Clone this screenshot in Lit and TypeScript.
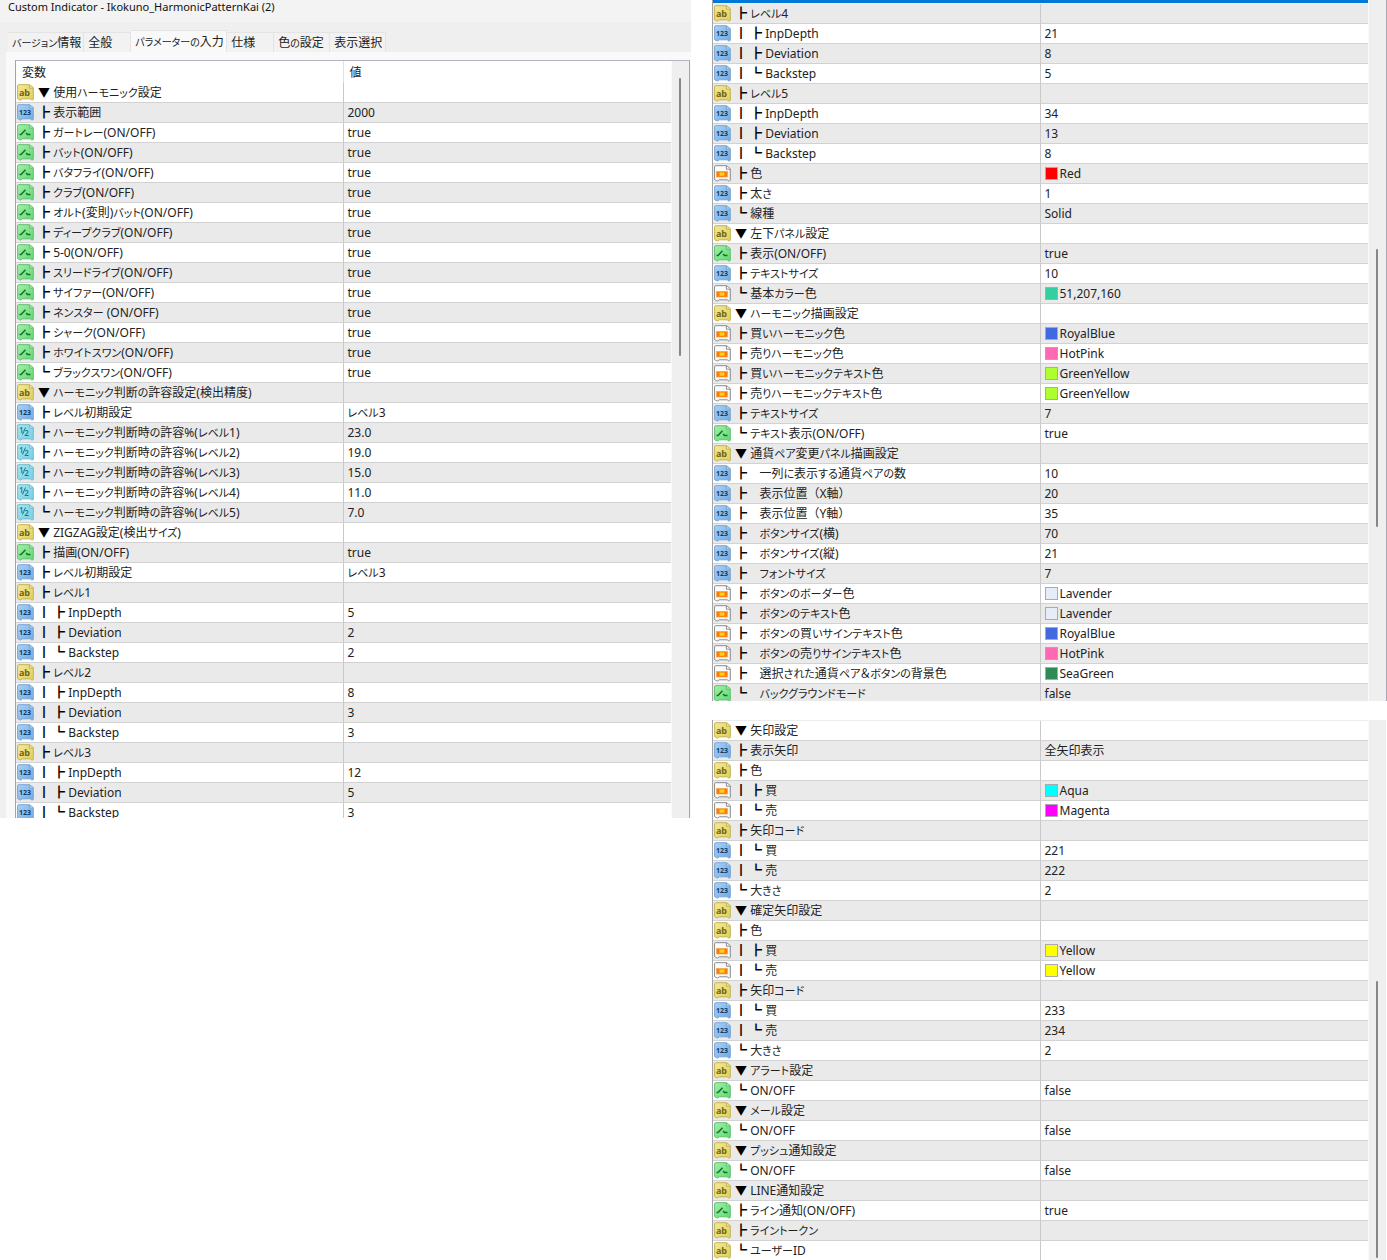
import { LitElement, html, svg, css, nothing } from "lit";
import { customElement, property } from "lit/decorators.js";

type Kind = "ab" | "int" | "bool" | "real" | "color";
interface Param {
  kind: Kind;
  name: string;
  value: string;
  color?: string;
}

const p = (kind: Kind, name: string, value = "", color?: string): Param => ({ kind, name, value, color });

const mainParams: Param[] = [
  p("ab", "▼ 使用ハーモニック設定"),
  p("int", "┣ 表示範囲", "2000"),
  p("bool", "┣ ガートレー(ON/OFF)", "true"),
  p("bool", "┣ バット(ON/OFF)", "true"),
  p("bool", "┣ バタフライ(ON/OFF)", "true"),
  p("bool", "┣ クラブ(ON/OFF)", "true"),
  p("bool", "┣ オルト(変則)バット(ON/OFF)", "true"),
  p("bool", "┣ ディープクラブ(ON/OFF)", "true"),
  p("bool", "┣ 5-0(ON/OFF)", "true"),
  p("bool", "┣ スリードライブ(ON/OFF)", "true"),
  p("bool", "┣ サイファー(ON/OFF)", "true"),
  p("bool", "┣ ネンスター (ON/OFF)", "true"),
  p("bool", "┣ シャーク(ON/OFF)", "true"),
  p("bool", "┣ ホワイトスワン(ON/OFF)", "true"),
  p("bool", "┗ ブラックスワン(ON/OFF)", "true"),
  p("ab", "▼ ハーモニック判断の許容設定(検出精度)"),
  p("int", "┣ レベル初期設定", "レベル3"),
  p("real", "┣ ハーモニック判断時の許容%(レベル1)", "23.0"),
  p("real", "┣ ハーモニック判断時の許容%(レベル2)", "19.0"),
  p("real", "┣ ハーモニック判断時の許容%(レベル3)", "15.0"),
  p("real", "┣ ハーモニック判断時の許容%(レベル4)", "11.0"),
  p("real", "┗ ハーモニック判断時の許容%(レベル5)", "7.0"),
  p("ab", "▼ ZIGZAG設定(検出サイズ)"),
  p("bool", "┣ 描画(ON/OFF)", "true"),
  p("int", "┣ レベル初期設定", "レベル3"),
  p("ab", "┣ レベル1"),
  p("int", "┃ ┣ InpDepth", "5"),
  p("int", "┃ ┣ Deviation", "2"),
  p("int", "┃ ┗ Backstep", "2"),
  p("ab", "┣ レベル2"),
  p("int", "┃ ┣ InpDepth", "8"),
  p("int", "┃ ┣ Deviation", "3"),
  p("int", "┃ ┗ Backstep", "3"),
  p("ab", "┣ レベル3"),
  p("int", "┃ ┣ InpDepth", "12"),
  p("int", "┃ ┣ Deviation", "5"),
  p("int", "┃ ┗ Backstep", "3"),
];

const drawParams: Param[] = [
  p("ab", "┣ レベル4"),
  p("int", "┃ ┣ InpDepth", "21"),
  p("int", "┃ ┣ Deviation", "8"),
  p("int", "┃ ┗ Backstep", "5"),
  p("ab", "┣ レベル5"),
  p("int", "┃ ┣ InpDepth", "34"),
  p("int", "┃ ┣ Deviation", "13"),
  p("int", "┃ ┗ Backstep", "8"),
  p("color", "┣ 色", "Red", "#ff0000"),
  p("int", "┣ 太さ", "1"),
  p("int", "┗ 線種", "Solid"),
  p("ab", "▼ 左下パネル設定"),
  p("bool", "┣ 表示(ON/OFF)", "true"),
  p("int", "┣ テキストサイズ", "10"),
  p("color", "┗ 基本カラー色", "51,207,160", "#33cfa0"),
  p("ab", "▼ ハーモニック描画設定"),
  p("color", "┣ 買いハーモニック色", "RoyalBlue", "#4169e1"),
  p("color", "┣ 売りハーモニック色", "HotPink", "#ff69b4"),
  p("color", "┣ 買いハーモニックテキスト色", "GreenYellow", "#adff2f"),
  p("color", "┣ 売りハーモニックテキスト色", "GreenYellow", "#adff2f"),
  p("int", "┣ テキストサイズ", "7"),
  p("bool", "┗ テキスト表示(ON/OFF)", "true"),
  p("ab", "▼ 通貨ペア変更パネル描画設定"),
  p("int", "┣    一列に表示する通貨ペアの数", "10"),
  p("int", "┣    表示位置（X軸）", "20"),
  p("int", "┣    表示位置（Y軸）", "35"),
  p("int", "┣    ボタンサイズ(横)", "70"),
  p("int", "┣    ボタンサイズ(縦)", "21"),
  p("int", "┣    フォントサイズ", "7"),
  p("color", "┣    ボタンのボーダー色", "Lavender", "#e6ecf8"),
  p("color", "┣    ボタンのテキスト色", "Lavender", "#e6ecf8"),
  p("color", "┣    ボタンの買いサインテキスト色", "RoyalBlue", "#4169e1"),
  p("color", "┣    ボタンの売りサインテキスト色", "HotPink", "#ff69b4"),
  p("color", "┣    選択された通貨ペア＆ボタンの背景色", "SeaGreen", "#2e8b57"),
  p("bool", "┗    バックグラウンドモード", "false"),
];

const arrowParams: Param[] = [
  p("ab", "▼ 矢印設定"),
  p("int", "┣ 表示矢印", "全矢印表示"),
  p("ab", "┣ 色"),
  p("color", "┃ ┣ 買", "Aqua", "#00ffff"),
  p("color", "┃ ┗ 売", "Magenta", "#ff00ff"),
  p("ab", "┣ 矢印コード"),
  p("int", "┃ ┗ 買", "221"),
  p("int", "┃ ┗ 売", "222"),
  p("int", "┗ 大きさ", "2"),
  p("ab", "▼ 確定矢印設定"),
  p("ab", "┣ 色"),
  p("color", "┃ ┣ 買", "Yellow", "#ffff00"),
  p("color", "┃ ┗ 売", "Yellow", "#ffff00"),
  p("ab", "┣ 矢印コード"),
  p("int", "┃ ┗ 買", "233"),
  p("int", "┃ ┗ 売", "234"),
  p("int", "┗ 大きさ", "2"),
  p("ab", "▼ アラート設定"),
  p("bool", "┗ ON/OFF", "false"),
  p("ab", "▼ メール設定"),
  p("bool", "┗ ON/OFF", "false"),
  p("ab", "▼ プッシュ通知設定"),
  p("bool", "┗ ON/OFF", "false"),
  p("ab", "▼ LINE通知設定"),
  p("bool", "┣ ライン通知(ON/OFF)", "true"),
  p("ab", "┣ ライントークン"),
  p("ab", "┗ ユーザーID"),
];

/* Kana are set one size below the kanji around them; bracketed full-width runs keep the full em. */
const runs = /([\u3041-\u30ff]+|（.+?）)/;
const mixed = (text: string) =>
  text
    .split(runs)
    .map((part, i) => (i % 2 ? html`<span class=${part[0] === "（" ? "full" : "kana"}>${part}</span>` : part));

const kanaStyle = css`
  .kana { font-size: 11px; line-height: 1px; }
  .full { font-feature-settings: normal; }
`;

const palette: Record<Kind, { light: string; dark: string; edge: string; ink: string }> = {
  ab: { light: "#f3e99a", dark: "#e0cf5c", edge: "#c4b252", ink: "#6e6414" },
  int: { light: "#a9d2f8", dark: "#6fa9e2", edge: "#7aa7d4", ink: "#123a66" },
  bool: { light: "#a4f0a8", dark: "#5fd873", edge: "#62c170", ink: "#14702a" },
  real: { light: "#a9e6f2", dark: "#74cfe2", edge: "#6fbccc", ink: "#1f7288" },
  color: { light: "#ffffff", dark: "#f4f4f4", edge: "#8a8a8a", ink: "#f08a00" },
};

@customElement("type-icon")
export class TypeIcon extends LitElement {
  @property() kind: Kind = "ab";

  static styles = css`
    :host { display: block; width: 17px; height: 17px; }
    svg { display: block; }
    text { font-family: "Open Sans", "Noto Sans", sans-serif; font-weight: 700; }
    .letters { font-size: 9px; }
    .digits { font-size: 7px; }
    .half { font-size: 8px; font-weight: 600; }
  `;

  private mark() {
    const ink = palette[this.kind].ink;
    switch (this.kind) {
      case "ab":
        return svg`<text class="letters" x="7.5" y="11.5" text-anchor="middle" fill=${ink}>ab</text>`;
      case "int":
        return svg`<text class="digits" x="8" y="11" text-anchor="middle" fill=${ink}>123</text>`;
      case "real":
        return svg`<text class="half" x="2" y="9" fill=${ink}>1</text>
          <path d="M8.5 3.5 5.5 10.5" stroke=${ink} fill="none"/>
          <text class="half" x="7.2" y="12" fill=${ink}>2</text>`;
      case "bool":
        return svg`<path d="M2.5 10.5H4L8.5 5.8M9 9.2 10.6 10.4H13.5" fill="none" stroke=${ink} stroke-width="1.5"/>`;
      default:
        return svg`<rect x="2.5" y="6.5" width="11" height="5.5" fill="#ff7a00" stroke="#f0a050" stroke-width=".6"/>
          <rect x="5.5" y="7.5" width="5" height="3.2" fill="#ffd21a"/>`;
    }
  }

  render() {
    const c = palette[this.kind];
    return html`<svg width="17" height="17" viewBox="0 0 17 17" aria-hidden="true">
      <defs>
        <linearGradient id="g" x1="0" y1="0" x2="1" y2="1">
          <stop offset="0" stop-color=${c.light} />
          <stop offset="1" stop-color=${c.dark} />
        </linearGradient>
      </defs>
      <path
        d="M1.5 .7H12.6L16.3 3.6V15.2Q15.4 17 14.2 15.6L13.2 14.8H5.2Q3.8 16.8 2.2 15.6L.6 14.6V1.6Q.6 .7 1.5 .7Z"
        fill="url(#g)" stroke=${c.edge} stroke-width="1" />
      <path d="M12.4 .9V4.2H16" fill=${c.light} stroke=${c.edge} stroke-width="1" />
      ${this.mark()}
    </svg>`;
  }
}

@customElement("param-table")
export class ParamTable extends LitElement {
  @property({ attribute: false }) rows: Param[] = [];
  @property({ type: Boolean }) heading = false;
  @property({ type: Boolean }) shaded = false;

  static styles = [kanaStyle, css`
    :host { display: block; min-width: 0; }
    table { width: 100%; table-layout: fixed; border-collapse: separate; border-spacing: 0; }
    th, td { padding: 0; text-align: left; font-weight: 400; white-space: pre; }
    th { height: 20px; line-height: 20px; padding: 2px 0 0 6px; background: #fff; }
    th:first-child { border-right: 1px solid #e2e2e2; }
    td { height: 19px; line-height: 19px; background: #fff; border-bottom: 1px solid #d2d2d2; }
    td:first-child { border-right: 1px solid #c9c9c9; }
    .plain tr:nth-child(even) td, .shaded tr:nth-child(odd) td { background: #eaeaea; }
    .name, .value { display: flex; align-items: center; height: 19px; }
    .name { padding-left: 1px; gap: 4px; }
    .value { padding-left: 4px; gap: 2px; }
    .tree { color: #000; }
    .swatch { width: 11px; height: 11px; border: 1px solid #a9a9b0; }
  `];

  private label(name: string) {
    const [, tree, rest] = name.match(/^([▼┣┗┃ ]+)(.*)$/)!;
    return html`<span><span class="tree">${tree}</span>${mixed(rest)}</span>`;
  }

  render() {
    return html`<table>
      ${this.heading
        ? html`<thead><tr><th scope="col">変数</th><th scope="col">値</th></tr></thead>`
        : nothing}
      <tbody class=${this.shaded ? "shaded" : "plain"}>
        ${this.rows.map(
          (r) => html`<tr>
            <td><div class="name"><type-icon .kind=${r.kind}></type-icon>${this.label(r.name)}</div></td>
            <td><div class="value">${r.color
              ? html`<span class="swatch" style="background:${r.color}"></span>`
              : nothing}<span>${mixed(r.value)}</span></div></td>
          </tr>`
        )}
      </tbody>
    </table>`;
  }
}

@customElement("app-root")
export class AppRoot extends LitElement {
  static styles = [kanaStyle, css`
    :host {
      display: block;
      background: #fff;
      color: #222;
      font: 12px/20px "Noto Sans", "Noto Sans CJK JP", sans-serif;
      font-feature-settings: "palt";
    }
    .page { display: grid; grid-template-columns: 691fr 679fr; column-gap: 17px; align-items: start; }
    .dialog { background: #efefef; min-width: 0; }
    .title { margin: 0; padding: 0 8px 8px; background: #f3f3f3; font: inherit; font-size: 11px; line-height: 14px; color: #111; }
    .tabs { display: flex; align-items: flex-end; padding: 8px 0 0 8px; }
    .tabs .kana { font-size: 10px; }
    .tab {
      height: 20px; padding: 0 2px 0 4px; border: 1px solid #e4e4e4; border-width: 1px 1px 0 0;
      background: #f2f2f2; color: inherit; font: inherit; font-feature-settings: inherit;
      line-height: 19px; text-align: left; white-space: nowrap;
    }
    .tab.narrow { min-width: 47px; }
    .tab.mid { min-width: 56px; }
    .tab.wide { min-width: 76px; }
    .tab.active { height: 22px; min-width: 96px; background: #f9f9f9; line-height: 18px; }
    .sheet { margin-left: 6px; padding: 8px 1px 0 9px; background: #f9f9f9; }
    .column { display: flex; flex-direction: column; gap: 19px; min-width: 0; }
    .list { display: flex; overflow: hidden; background: #efefef; border-left: 1px solid #a3a3a8; }
    .list param-table { flex: 1; }
    .framed { border-top: 1px solid #b4b4bc; border-right: 1px solid #a3a3a8; }
    .framed param-table { margin-bottom: -5px; }
    .side { margin-left: 4px; }
    .middle { border-right: 1px solid #a9a9b3; }
    .middle param-table { margin-bottom: -3px; padding-top: 1px; border-top: 3px solid #0078d7; }
    .last { border-right: 1px solid #fff; }
    .last param-table { margin-bottom: -1px; border-top: 1px solid #ececec; }
    .rail { display: flex; width: 18px; flex: none; justify-content: center; padding-right: 2px; border-left: 1px solid #fafafa; box-sizing: border-box; }
    .thumb { width: 2px; border-radius: 1px; background: #868686; }
    .thumb.a { margin-top: 17px; height: 278px; }
    .thumb.b { margin-top: 249px; height: 278px; }
    .thumb.c { margin-top: 261px; height: 277px; }
  `];

  render() {
    return html`<main class="page">
      <section class="dialog">
        <h1 class="title">Custom Indicator - Ikokuno_HarmonicPatternKai (2)</h1>
        <div class="tabs" role="tablist">
          <button class="tab wide" role="tab" aria-selected="false">${mixed("バージョン情報")}</button>
          <button class="tab narrow" role="tab" aria-selected="false">${mixed("全般")}</button>
          <button class="tab active" role="tab" aria-selected="true">${mixed("パラメーターの入力")}</button>
          <button class="tab narrow" role="tab" aria-selected="false">${mixed("仕様")}</button>
          <button class="tab mid" role="tab" aria-selected="false">${mixed("色の設定")}</button>
          <button class="tab mid" role="tab" aria-selected="false">${mixed("表示選択")}</button>
        </div>
        <div class="sheet" role="tabpanel">
          <div class="list framed">
            <param-table heading .rows=${mainParams}></param-table>
            <div class="rail"><div class="thumb a"></div></div>
          </div>
        </div>
      </section>
      <div class="column">
        <div class="list middle side">
          <param-table shaded .rows=${drawParams}></param-table>
          <div class="rail"><div class="thumb b"></div></div>
        </div>
        <div class="list last side">
          <param-table .rows=${arrowParams}></param-table>
          <div class="rail"><div class="thumb c"></div></div>
        </div>
      </div>
    </main>`;
  }
}
